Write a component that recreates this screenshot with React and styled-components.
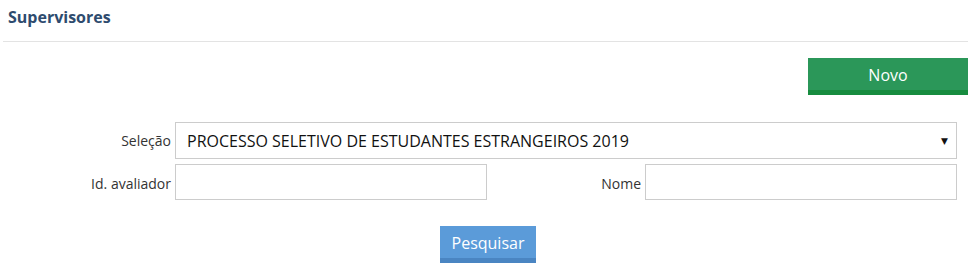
import React from "react";
import styled, { createGlobalStyle } from "styled-components";

const Global = createGlobalStyle`
  html, body { margin: 0; padding: 0; background: #fff; }
  body { font-family: "Open Sans", "Liberation Sans", Arial, sans-serif; color: #333; }
  * { box-sizing: border-box; }
`;

const Page = styled.div`
  width: 971px;
`;

const Header = styled.div`
  margin: 0 3px;
  padding: 6px 5px 0;
  height: 42px;
  border-bottom: 1px solid #e3e3e3;
`;

const Title = styled.h3`
  margin: 0;
  font-size: 16px;
  line-height: 22px;
  font-weight: 700;
  color: #2e4b6e;
`;

const Toolbar = styled.div`
  display: flex;
  justify-content: flex-end;
  padding: 16px 3px 0 0;
`;

const Button = styled.button`
  height: 37px;
  width: ${(p) => p.$width}px;
  border: none;
  border-bottom: 5px solid ${(p) => p.$edge};
  background: ${(p) => p.$bg};
  color: #fff;
  font-family: "Open Sans", "Liberation Sans", Arial, sans-serif;
  font-size: 16px;
  padding: 1px 0 0;
  cursor: pointer;
`;

const Form = styled.div`
  display: grid;
  grid-template-columns: 171px 312px 150px 312px;
  grid-template-rows: 37px 36px;
  column-gap: 4px;
  row-gap: 5px;
  margin-top: 27px;
`;

const Label = styled.label`
  display: flex;
  align-items: center;
  justify-content: flex-end;
  font-size: 14px;
  color: #333;
  padding-top: ${(p) => (p.$top ? "0" : "2px")};
`;

const SelectBox = styled.div`
  grid-column: 2 / span 3;
  border: 1px solid #cccccc;
  display: flex;
  align-items: center;
  justify-content: space-between;
  padding: 0 8px 0 11px;
  font-size: 16px;
  color: #111;
`;

const Caret = styled.span`
  font-size: 9px;
  color: #111;
  font-family: "DejaVu Sans", sans-serif;
`;

const Input = styled.input`
  border: 1px solid #cccccc;
  font-family: inherit;
  font-size: 14px;
  padding: 0 8px;
  outline: none;
`;

const Actions = styled.div`
  display: flex;
  justify-content: center;
  padding-left: 5px;
  margin-top: 26px;
`;

export default function App() {
  return (
    <Page>
      <Global />
      <Header>
        <Title>Supervisores</Title>
      </Header>
      <Toolbar>
        <Button $width={160} $bg="#2b9759" $edge="#178c3f">Novo</Button>
      </Toolbar>
      <Form>
        <Label $top>Seleção</Label>
        <SelectBox>
          <span>PROCESSO SELETIVO DE ESTUDANTES ESTRANGEIROS 2019</span>
          <Caret>▼</Caret>
        </SelectBox>
        <Label>Id. avaliador</Label>
        <Input />
        <Label>Nome</Label>
        <Input />
      </Form>
      <Actions>
        <Button $width={96} $bg="#5b9bd9" $edge="#4a85c2">Pesquisar</Button>
      </Actions>
    </Page>
  );
}
